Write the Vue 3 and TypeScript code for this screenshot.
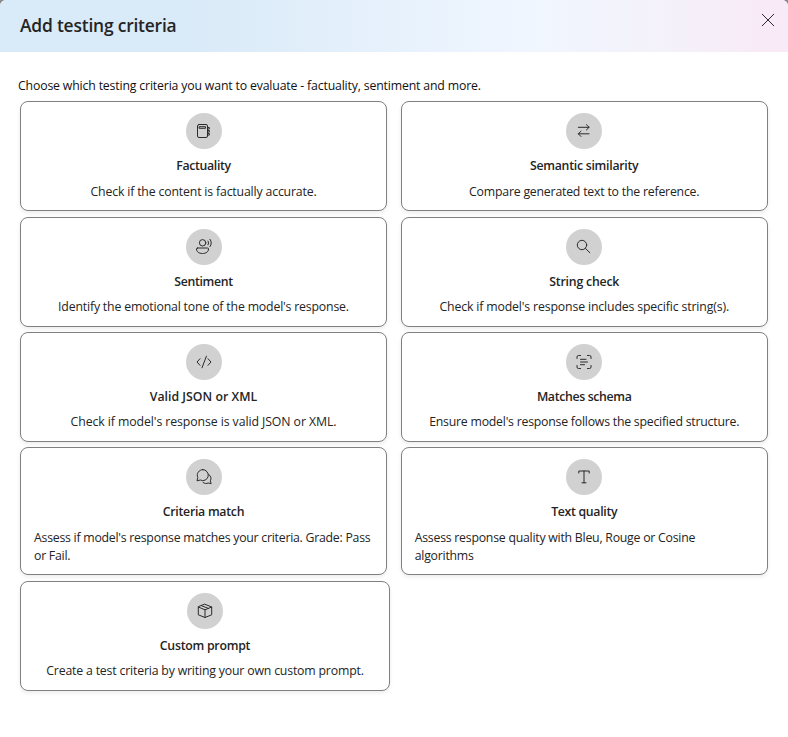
<script setup lang="ts">
interface Criterion {
  icon: string
  title: string
  description: string
  titleTracking: number
  tracking: number
}

const rows: Criterion[][] = [
  [
    { icon: 'notebook', title: 'Factuality', description: 'Check if the content is factually accurate.', titleTracking: -0.33, tracking: -0.17 },
    { icon: 'swap', title: 'Semantic similarity', description: 'Compare generated text to the reference.', titleTracking: -0.26, tracking: -0.21 },
  ],
  [
    { icon: 'voice', title: 'Sentiment', description: "Identify the emotional tone of the model's response.", titleTracking: -0.33, tracking: -0.18 },
    { icon: 'search', title: 'String check', description: "Check if model's response includes specific string(s).", titleTracking: -0.2, tracking: -0.15 },
  ],
  [
    { icon: 'code', title: 'Valid JSON or XML', description: "Check if model's response is valid JSON or XML.", titleTracking: 0.02, tracking: -0.09 },
    { icon: 'scan', title: 'Matches schema', description: "Ensure model's response follows the specified structure.", titleTracking: -0.34, tracking: -0.23 },
  ],
  [
    { icon: 'chat', title: 'Criteria match', description: "Assess if model's response matches your criteria. Grade: Pass or Fail.", titleTracking: -0.27, tracking: -0.25 },
    { icon: 'text', title: 'Text quality', description: 'Assess response quality with Bleu, Rouge or Cosine algorithms', titleTracking: -0.31, tracking: -0.24 },
  ],
  [
    { icon: 'box', title: 'Custom prompt', description: 'Create a test criteria by writing your own custom prompt.', titleTracking: -0.25, tracking: -0.18 },
  ],
]

const glyphs: Record<string, string[]> = {
  notebook: [
    'M4 2.500h7a1.500 1.500 0 0 1 1.500 1.500v10a1.500 1.500 0 0 1-1.500 1.500H4A1.500 1.500 0 0 1 2.500 14V4A1.500 1.500 0 0 1 4 2.500z',
    'M4.500 4.700h6v1.600h-6z',
    'M12.500 5.500h1.800v1.600h-1.800M12.500 8.500h1.800v1.600h-1.800M12.500 11.500h1.800v1.600h-1.800',
  ],
  swap: ['M3.300 5.300h10.800M11.400 2.700l2.700 2.600-2.700 2.700M14 11.800H3.300M6 9.200l-2.700 2.600L6 14.500'],
  voice: [
    'M10.800 4.800a3.200 3.200 0 1 1-6.400 0 3.200 3.200 0 0 1 6.400 0z',
    'M2.500 10h10a1 1 0 0 1 1 1c0 2.800-2.500 4.500-6 4.500s-6-1.700-6-4.500a1 1 0 0 1 1-1z',
    'M13 3c.7 1.200.7 2.600 0 3.800M15 1.300c1.700 2.300 1.700 5 0 7.300',
  ],
  search: ['M11.700 7a4.700 4.700 0 1 1-9.400 0 4.700 4.700 0 0 1 9.400 0zM10.500 10.500l4.300 4.200'],
  code: ['M5 5.700L2 9l3 3.300M13 5.700L16 9l-3 3.300M11.400 3.200L7 14.800'],
  scan: [
    'M2 5.500V4a1.500 1.500 0 0 1 1.500-1.500H5.500M12.500 2.500h2A1.500 1.500 0 0 1 16 4v1.500M16 12.500V14a1.500 1.500 0 0 1-1.500 1.500h-2M5.500 15.500h-2A1.500 1.500 0 0 1 2 14v-1.500',
    'M5.500 6.300h5.500M5.500 9h7M5.500 11.700h4',
  ],
  chat: [
    'M7.800 1.600a5.500 5.500 0 1 1-2.500 10.400L2 12.800l.8-3.300A5.500 5.500 0 0 1 7.800 1.600z',
    'M8 14.400c1.500 1.300 3.500 1.400 5.200.6l2.900.7-.7-2.900c1.200-2.500.5-5-1.600-6.300',
  ],
  text: ['M3.800 5V3h10.400V5M9 3v11.800M7 14.800h4'],
  box: [
    'M9 2.300l6.700 2.700v7.800L9 15.500l-6.700-2.700V5z',
    'M2.300 5L9 7.800l6.700-2.800M9 7.800v7.700M5.600 3.700l6.700 2.700',
  ],
}
</script>

<template>
  <main class="dialog">
    <header class="header">
      <h1 class="heading">Add testing criteria</h1>
      <button class="close" type="button" aria-label="Close">
        <svg viewBox="0 0 14 14" width="14" height="14"><path d="M1.200 1.200l11.600 11.600M12.800 1.200L1.200 12.800" /></svg>
      </button>
    </header>
    <p class="intro">Choose which testing criteria you want to evaluate - factuality, sentiment and more.</p>
    <section class="list">
      <div v-for="(row, i) in rows" :key="i" class="row" :class="{ single: row.length === 1 }">
        <article v-for="item in row" :key="item.title" class="card">
          <span class="badge">
            <svg viewBox="0 0 18 18" width="18" height="18">
              <path v-for="d in glyphs[item.icon]" :key="d" :d="d" />
            </svg>
          </span>
          <h2 class="title" :style="{ letterSpacing: item.titleTracking + 'px' }">{{ item.title }}</h2>
          <p class="description" :class="item.icon" :style="{ letterSpacing: item.tracking + 'px' }">{{ item.description }}</p>
        </article>
      </div>
    </section>
  </main>
</template>

<style>
body {
  background: #8a8a8a;
}
</style>

<style scoped>
.dialog {
  box-sizing: border-box;
  height: 737px;
  overflow: hidden;
  border-radius: 6px 6px 0 0;
  background: #fff;
  color: #242424;
  font-family: "Open Sans", "Noto Sans", sans-serif;
}
.header {
  display: flex;
  justify-content: space-between;
  box-sizing: border-box;
  height: 52px;
  padding: 12px 13px 0 20px;
  background: linear-gradient(90deg, #d9eaf8 0%, #d9eaf8 24%, #f0f6ff 67%, #f4f1fa 85%, #f8eaf7 97%);
}
.heading {
  margin: 0;
  font-size: 17.400px;
  line-height: 26px;
  font-weight: 600;
  letter-spacing: -0.190px;
}
.close {
  width: 14px;
  height: 14px;
  margin-top: 1px;
  padding: 0;
  border: 0;
  background: none;
}
svg {
  display: block;
  fill: none;
  stroke: #2b2b2b;
  stroke-width: 1;
  stroke-linecap: round;
  stroke-linejoin: round;
}
.intro {
  margin: 24px 0 6.400px 18px;
  color: #111;
  font-size: 12.300px;
  line-height: 19px;
  letter-spacing: -0.170px;
}
.list {
  display: flex;
  flex-direction: column;
  gap: 5.300px;
  padding: 0 20px;
}
.row {
  display: grid;
  grid-template-columns: 367px 367px;
  gap: 13.700px;
}
.row.single {
  grid-template-columns: 370px;
}
.card {
  display: flex;
  flex-direction: column;
  align-items: center;
  box-sizing: border-box;
  min-height: 110px;
  padding: 11px 13px 9.400px;
  border: 1px solid #808080;
  border-radius: 8px;
  background: #fff;
  box-shadow: 0 2px 4px rgba(0, 0, 0, 0.08);
}
.badge {
  display: flex;
  align-items: center;
  justify-content: center;
  width: 36px;
  height: 36px;
  border-radius: 50%;
  background: #d1d1d1;
}
.title {
  margin: 7px 0 6.300px;
  font-size: 12.300px;
  line-height: 20px;
  font-weight: 600;
}
.description {
  margin: 0;
  font-size: 12.300px;
  line-height: 18.200px;
}
.description.text {
  padding-right: 12px;
}
</style>
